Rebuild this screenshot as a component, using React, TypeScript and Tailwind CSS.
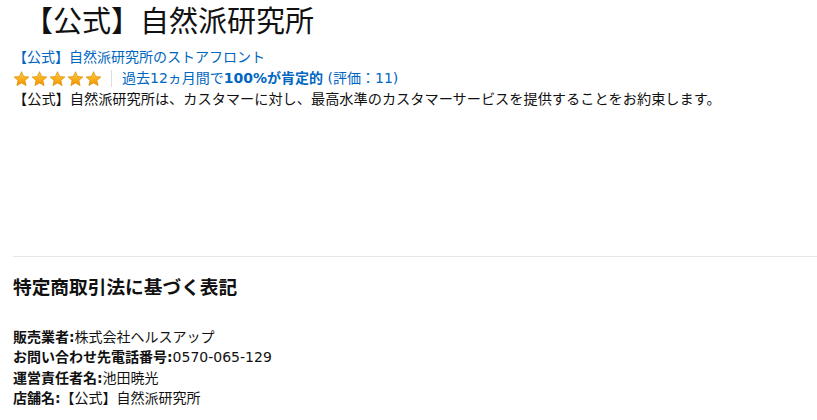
import { Fragment } from 'react';

const font = { fontFamily: '"DejaVu Sans", "Noto Sans CJK JP", sans-serif' };

function Star() {
  return (
    <svg width="17" height="16" viewBox="0 0 24 23">
      <defs>
        <linearGradient id="sg" x1="0" y1="0" x2="0" y2="1">
          <stop offset="0" stopColor="#ffce3d" />
          <stop offset="1" stopColor="#f29200" />
        </linearGradient>
      </defs>
      <path
        d="M12 1 L15.1 8 L22.6 8.6 L16.9 13.6 L18.6 21 L12 17.1 L5.4 21 L7.1 13.6 L1.4 8.6 L8.9 8 Z"
        fill="url(#sg)"
        stroke="#d98a00"
        strokeWidth="1"
        strokeLinejoin="round"
      />
    </svg>
  );
}

const info = [
  { label: '販売業者:', value: '株式会社ヘルスアップ' },
  { label: 'お問い合わせ先電話番号:', value: '0570-065-129' },
  { label: '運営責任者名:', value: '池田暁光' },
  { label: '店舗名:', value: '【公式】自然派研究所' },
];

export default function App() {
  return (
    <div className="w-[817px] h-[420px] overflow-hidden bg-white text-[#111111]" style={font}>
      <div className="pl-[13px]">
        <h1 className="pl-[11px] pt-[2px] text-[29px] leading-[41px] font-normal text-[#111111]">
          【公式】自然派研究所
        </h1>
        <a className="block mt-[4px] text-[14px] leading-[21px] text-[#0066c0]">
          【公式】自然派研究所のストアフロント
        </a>
        <div className="flex items-center h-[21px] text-[14px] text-[#0066c0]">
          <div className="flex gap-[1px]">
            {[0, 1, 2, 3, 4].map((i) => (
              <Star key={i} />
            ))}
          </div>
          <span className="ml-[9px] mr-[10px] h-[17px] w-px bg-[#dddddd]" />
          <span>
            過去12ヵ月間で<span className="font-bold">100%が肯定的</span> (評価：11)
          </span>
        </div>
        <p className="text-[14.2px] leading-[21px] text-[#111111]">
          【公式】自然派研究所は、カスタマーに対し、最高水準のカスタマーサービスを提供することをお約束します。
        </p>
      </div>

      <div className="mt-[146px] ml-[13px] border-t border-[#e7e7e7]" />

      <div className="pl-[13px]">
        <h2 className="mt-[19px] text-[18.7px] leading-[24px] font-bold">特定商取引法に基づく表記</h2>
        <div className="mt-[27px] text-[14px] leading-[20.3px]">
          {info.map((row) => (
            <Fragment key={row.label}>
              <div>
                <span className="font-bold">{row.label}</span>
                {row.value}
              </div>
            </Fragment>
          ))}
        </div>
      </div>
    </div>
  );
}
